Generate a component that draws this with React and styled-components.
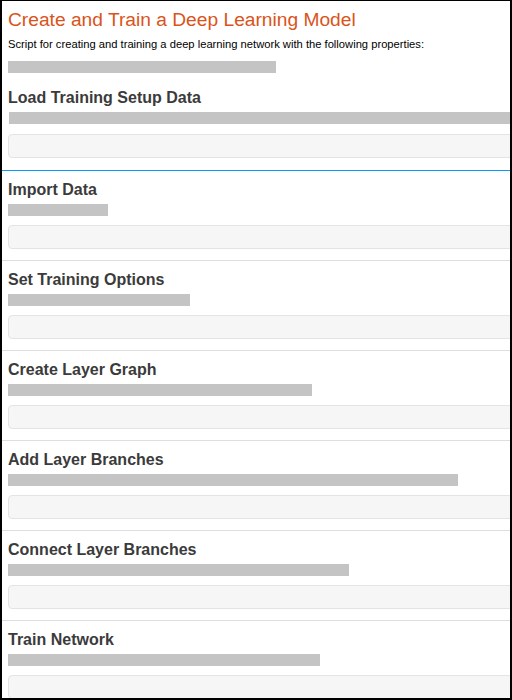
import React from "react";
import styled, { createGlobalStyle } from "styled-components";

const Global = createGlobalStyle`
  html, body { margin: 0; padding: 0; background: #fff; }
  body { font-family: "Liberation Sans", Arial, sans-serif; }
`;

const Frame = styled.div`
  width: 512px;
  height: 700px;
  box-sizing: border-box;
  border: 2px solid #000;
  border-top-width: 1px;
  overflow: hidden;
  background: #fff;
`;

const Doc = styled.div`
  width: 560px;
`;

const Header = styled.header`
  padding: 8px 0 7px 6px;
  display: flex;
  flex-direction: column;
  align-items: flex-start;
`;

const Title = styled.h1`
  margin: 0;
  font-size: 19.2px;
  line-height: 22px;
  font-weight: normal;
  color: #d9541a;
`;

const Subtitle = styled.p`
  margin: 6px 0 0;
  font-size: 11.2px;
  line-height: 14px;
  color: #000;
`;

const Bar = styled.div`
  height: 12px;
  background: #c4c4c4;
  width: ${(p) => (p.$w ? `${p.$w}px` : "100%")};
  margin-top: ${(p) => p.$mt ?? 4}px;
  margin-left: ${(p) => p.$ml ?? 0}px;
  flex: none;
`;

const Section = styled.section`
  display: flex;
  flex-direction: column;
  padding: ${(p) => (p.$first ? "8px 0 12px 6px" : "9px 0 11px 6px")};
  border-bottom: 1px solid ${(p) => (p.$active ? "#0a9cf5" : "#dedede")};
`;

const Heading = styled.h2`
  margin: 0;
  font-size: 16px;
  line-height: 20px;
  font-weight: bold;
  color: #3b3b3b;
`;

const CodeBox = styled.div`
  height: 24px;
  box-sizing: border-box;
  margin-top: ${(p) => (p.$first ? 10 : 9)}px;
  background: #f6f6f6;
  border: 1px solid #e4e4e4;
  border-radius: 4px;
`;

const sections = [
  { title: "Load Training Setup Data", bar: null, first: true, active: true },
  { title: "Import Data", bar: 100 },
  { title: "Set Training Options", bar: 182 },
  { title: "Create Layer Graph", bar: 304 },
  { title: "Add Layer Branches", bar: 450 },
  { title: "Connect Layer Branches", bar: 341 },
  { title: "Train Network", bar: 312 },
];

export default function App() {
  return (
    <>
      <Global />
      <Frame>
        <Doc>
          <Header>
            <Title>Create and Train a Deep Learning Model</Title>
            <Subtitle>
              Script for creating and training a deep learning network with the following properties:
            </Subtitle>
            <Bar $w={268} $mt={10} />
          </Header>
          {sections.map((s) => (
            <Section key={s.title} $first={s.first} $active={s.active}>
              <Heading>{s.title}</Heading>
              <Bar $w={s.bar} $ml={s.first ? 1 : 0} />
              <CodeBox $first={s.first} />
            </Section>
          ))}
        </Doc>
      </Frame>
    </>
  );
}
